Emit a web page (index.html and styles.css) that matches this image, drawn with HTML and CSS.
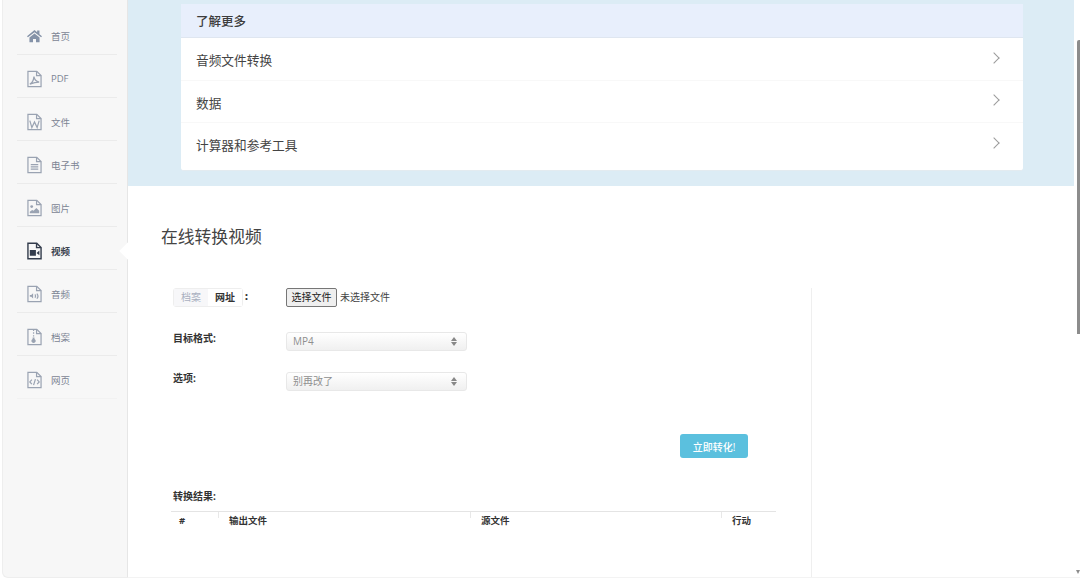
FILE: index.html
```html
<!DOCTYPE html>
<html lang="zh-CN">
  <head>
    <meta charset="utf-8">
    <title>在线转换视频</title>
    <link rel="stylesheet" href="styles.css">
  </head>
  <body>
    <nav class="sidebar">
      <a class="nav-item">
        <svg class="nav-icon" viewBox="0 0 16 18"><path class="solid-home" d="M0 9.300 8 2.600l2.800 2.300V3.200h2.500v3.800L16 9.300l-1 1L8 4.900 1 10.300zM2.600 10.600 8 6.200l5.400 4.400v5H9.600v-3.400H6.400v3.400H2.600z"/></svg>
        <span>首页</span>
      </a>
      <a class="nav-item">
        <svg class="nav-icon" viewBox="0 0 16 18"><path class="doc" d="M1 .8h9.400L15 5.200v12H1z"/><path class="doc" d="M10.200 .8v4.600H15"/><path class="doc" d="M3 14.500c2.500-1.200 4-4 4.400-8 .5 3.400 2.300 5.200 5.600 5.800-3.500 0-6.500.8-10 2.200z"/></svg>
        <span>PDF</span>
      </a>
      <a class="nav-item">
        <svg class="nav-icon" viewBox="0 0 16 18"><path class="doc" d="M1 .8h9.400L15 5.200v12H1z"/><path class="doc" d="M10.200 .8v4.600H15"/><path class="doc" d="M3 7.500l2.200 7.500 2.800-6 2.800 6L13 7.500"/></svg>
        <span>文件</span>
      </a>
      <a class="nav-item">
        <svg class="nav-icon" viewBox="0 0 16 18"><path class="doc" d="M1 .8h9.400L15 5.200v12H1z"/><path class="doc" d="M10.200 .8v4.600H15"/><path class="doc" d="M4 8.500h8M4 11h8M4 13.500h8"/></svg>
        <span>电子书</span>
      </a>
      <a class="nav-item">
        <svg class="nav-icon" viewBox="0 0 16 18"><path class="doc" d="M1 .8h9.400L15 5.200v12H1z"/><path class="doc" d="M10.200 .8v4.600H15"/><circle class="solid" cx="5" cy="7.500" r="1.500"/><path class="solid" d="M3 14.500v-1.500l2.500-2 1.500 1 3-3 3 3v2.500z"/></svg>
        <span>图片</span>
      </a>
      <a class="nav-item is-active">
        <svg class="nav-icon" viewBox="0 0 16 18"><path class="doc" d="M1 .8h9.400L15 5.200v12H1z"/><path class="doc" d="M10.200 .8v4.600H15"/><path class="solid" d="M3 8h6.500v6H3zM10.200 11l3-2.500v5z"/></svg>
        <span>视频</span>
      </a>
      <a class="nav-item">
        <svg class="nav-icon" viewBox="0 0 16 18"><path class="doc" d="M1 .8h9.400L15 5.200v12H1z"/><path class="doc" d="M10.200 .8v4.600H15"/><path class="solid" d="M3 10h1.500l2-1.800v5.600l-2-1.800H3z"/><path class="doc" d="M8.500 9.500c.8 1 .8 2.500 0 3.500M10.500 8.500c1.400 1.600 1.400 3.900 0 5.500"/></svg>
        <span>音频</span>
      </a>
      <a class="nav-item">
        <svg class="nav-icon" viewBox="0 0 16 18"><path class="doc" d="M1 .8h9.400L15 5.200v12H1z"/><path class="doc" d="M10.200 .8v4.600H15"/><path class="doc" d="M7 1v1.500M7 4v1.500M7 7v1.500"/><path class="solid" d="M6 9.500h2V11c1 .8 1.300 1.500 1.300 2.300 0 1.200-1 2-2.300 2s-2.300-.8-2.300-2c0-.8.300-1.500 1.300-2.300z"/></svg>
        <span>档案</span>
      </a>
      <a class="nav-item">
        <svg class="nav-icon" viewBox="0 0 16 18"><path class="doc" d="M1 .8h9.400L15 5.200v12H1z"/><path class="doc" d="M10.200 .8v4.600H15"/><path class="doc" d="M5.200 8.500 3 11l2.200 2.500M10.800 8.500 13 11l-2.200 2.500M9 8l-2 6.500"/></svg>
        <span>网页</span>
      </a>
    </nav>

    <main class="content">
      <section class="banner">
        <div class="panel">
          <div class="panel-head">了解更多</div>
          <a class="panel-row">音频文件转换<span class="chevron"></span></a>
          <a class="panel-row">数据<span class="chevron"></span></a>
          <a class="panel-row">计算器和参考工具<span class="chevron"></span></a>
        </div>
      </section>

      <h1 class="page-title">在线转换视频</h1>

      <div class="converter">
        <div class="form-col">
          <div class="form-row row-file">
            <div class="form-label">
              <span class="tabs"><span class="tab">档案</span><span class="tab is-on">网址</span></span><b class="colon">:</b>
            </div>
            <div class="file-field"><span class="file-btn">选择文件</span><span>未选择文件</span></div>
          </div>
          <div class="form-row row-format">
            <label class="form-label">目标格式:</label>
            <div class="fake-select">MP4<span class="updown"></span></div>
          </div>
          <div class="form-row row-option">
            <label class="form-label">选项:</label>
            <div class="fake-select">别再改了<span class="updown"></span></div>
          </div>
          <div class="submit-row"><button class="convert-btn">立即转化!</button></div>
          <div class="result-label">转换结果:</div>
          <table class="result-table">
            <tr>
              <th class="col-num">#</th>
              <th class="col-out">输出文件</th>
              <th class="col-src">源文件</th>
              <th>行动</th>
            </tr>
          </table>
        </div>
      </div>
    </main>

    <div class="scrollbar"></div>
    <div class="scroll-arrow"></div>
  </body>
</html>
```

FILE: styles.css
```css
* {
  box-sizing: border-box;
}

html,
body {
  height: 579px;
  margin: 0;
  overflow: hidden;
}

body {
  display: flex;
  background-color: #fff;
  color: #333;
  font-family: "Open Sans", "Noto Sans CJK SC", sans-serif;
  font-size: 10px;
}

/* sidebar */
.sidebar {
  width: 126px;
  height: 578px;
  margin-left: 2px;
  padding: 12px 10px 0 14px;
  flex-shrink: 0;
  background-color: #f7f7f7;
  border-left: 1px solid #eeeeee;
  border-right: 1px solid #e6e6e6;
  border-bottom: 1px solid #eeeeee;
  border-bottom-left-radius: 6px;
}

.nav-item {
  position: relative;
  display: flex;
  align-items: center;
  height: 43px;
  padding: 5px 0 0 10px;
  border-bottom: 1px solid #ebebeb;
  color: #7d8594;
  font-size: 9.500px;
}

.nav-item:last-child {
  border-bottom-color: #f2f2f2;
}

.nav-icon {
  width: 15px;
  height: 18px;
  margin-right: 9px;
  flex-shrink: 0;
}

.doc {
  fill: none;
  stroke: #9aa3b2;
  stroke-width: 1.300;
}

.solid {
  fill: #9aa3b2;
}

.solid-home {
  fill: #8492a8;
}

.is-active {
  color: #3b4350;
  font-weight: 700;
}

.is-active .doc {
  stroke: #333c4c;
  stroke-width: 1.500;
}

.is-active .solid {
  fill: #333c4c;
}

/* little white notch on the sidebar edge */
.is-active::after {
  content: "";
  position: absolute;
  right: -11px;
  top: 18px;
  width: 12px;
  height: 12px;
  background-color: #fff;
  transform: rotate(45deg) translate(4px, -4px);
}

/* main */
.content {
  flex: 1;
  min-width: 0;
  height: 578px;
  border-bottom: 1px solid #f3f3f3;
}

.banner {
  height: 186px;
  margin-right: 6px;
  padding: 4px 51px 0 53px;
  background-color: #dcecf5;
}

.panel {
  height: 167px;
  background-color: #fff;
  border-radius: 3px;
  border-bottom: 1px solid #e3ebf0;
  color: #444;
  font-size: 12.700px;
}

.panel-head {
  height: 34px;
  padding-left: 15px;
  background-color: #e8effc;
  border-bottom: 1px solid #dfe6f0;
  color: #3d3d3d;
  font-size: 12.500px;
  font-weight: 500;
  line-height: 35px;
}

.panel-row {
  display: flex;
  align-items: center;
  justify-content: space-between;
  height: 42.500px;
  padding: 2px 25px 0 15px;
  border-bottom: 1px solid #f8f8f8;
}

.panel-row:last-child {
  padding-top: 1px;
  border-bottom: 0;
}

.chevron {
  width: 8px;
  height: 8px;
  margin-top: -4px;
  border-top: 1.200px solid #9b9b9b;
  border-right: 1.200px solid #9b9b9b;
  transform: rotate(45deg);
}

.page-title {
  margin: 39px 0 0 33px;
  color: #444;
  font-size: 16.800px;
  font-weight: 400;
  line-height: 24px;
}

.converter {
  width: 684px;
  height: 289px;
  margin-top: 39px;
  border-right: 1px solid #efefef;
}

.form-col {
  padding-left: 45px;
  padding-right: 35px;
}

.form-row {
  display: flex;
}

.form-label {
  width: 113px;
  color: #333;
  font-size: 10px;
  font-weight: 700;
  line-height: 12px;
  flex-shrink: 0;
}

.row-file {
  height: 44px;
}

.row-format {
  height: 40px;
}

.row-option {
  height: 62px;
}

.tabs {
  display: inline-flex;
  height: 19px;
  border: 1px solid #eeeeee;
  border-radius: 3px;
  vertical-align: top;
}

.tab {
  padding: 0 7px;
  color: #a9afbf;
  font-weight: 400;
  line-height: 17px;
  background-color: #f7f7f9;
}

.tab.is-on {
  color: #333;
  font-weight: 700;
  background-color: #fff;
}

.colon {
  margin-left: 2px;
  line-height: 17px;
}

.file-field {
  display: flex;
  align-items: center;
  gap: 3px;
  height: 19px;
  color: #444;
  line-height: 17px;
}

.file-btn {
  width: 51px;
  height: 19px;
  background-color: #efefef;
  border: 1px solid #767676;
  border-radius: 2px;
  color: #222;
  line-height: 17px;
  text-align: center;
}

.fake-select {
  position: relative;
  width: 181px;
  height: 19px;
  padding-left: 6px;
  background: linear-gradient(#ffffff, #f0f0f0);
  border: 1px solid #e8e8e8;
  border-radius: 3px;
  color: #8f8f8f;
  line-height: 17px;
}

/* the double arrow of a native select */
.updown {
  position: absolute;
  right: 9px;
  top: 4px;
  width: 6px;
  height: 9px;
}

.updown::before,
.updown::after {
  content: "";
  position: absolute;
  left: 0;
  border-left: 3px solid transparent;
  border-right: 3px solid transparent;
}

.updown::before {
  top: 0;
  border-bottom: 4px solid #888;
}

.updown::after {
  bottom: 0;
  border-top: 4px solid #888;
}

.submit-row {
  display: flex;
  justify-content: flex-end;
  height: 55px;
  padding-right: 28px;
}

.convert-btn {
  width: 68px;
  height: 24px;
  padding: 0;
  background-color: #5bc0de;
  border: 0;
  border-radius: 3px;
  color: #fff;
  font-family: inherit;
  font-size: 10px;
  font-weight: 500;
}

.result-label {
  height: 22px;
  font-weight: 700;
  line-height: 14px;
}

.result-table {
  width: 605px;
  margin-left: -2px;
  border-collapse: collapse;
  border-top: 1px solid #e4e4e4;
  table-layout: fixed;
}

.result-table th {
  height: 18px;
  padding: 1px 0 0 11px;
  background: linear-gradient(#e8e8e8, #e8e8e8) left top / 1px 6px no-repeat;
  font-size: 9.500px;
  font-weight: 700;
  line-height: 14px;
  text-align: left;
}

.result-table th:first-child {
  background: none;
  padding-left: 8px;
}

.col-num {
  width: 47px;
}

.col-out {
  width: 252px;
}

.col-src {
  width: 251px;
}

.scrollbar {
  position: absolute;
  right: 0;
  top: 40px;
  width: 3px;
  height: 294px;
  background-color: #8c8c8c;
  border-radius: 2px 0 0 0;
}

.scroll-arrow {
  position: absolute;
  right: 0;
  top: 570px;
  border-left: 2px solid transparent;
  border-right: 2px solid transparent;
  border-top: 4px solid #8c8c8c;
}
```
